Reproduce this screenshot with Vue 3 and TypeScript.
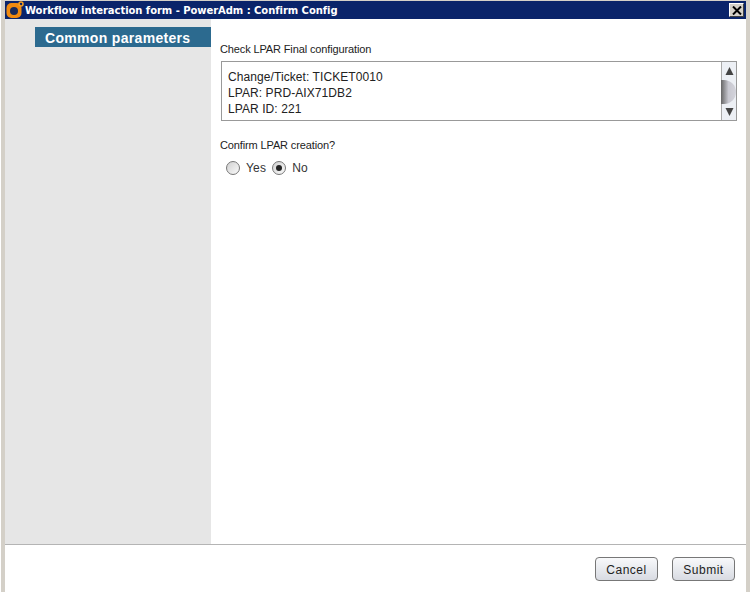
<script setup lang="ts">
const title = 'Workflow interaction form - PowerAdm : Confirm Config'
const lines = ['Change/Ticket: TICKET0010', 'LPAR: PRD-AIX71DB2', 'LPAR ID: 221']
</script>

<template>
  <div class="frame">
    <div class="window">
      <header class="titlebar">
        <svg class="logo" width="18" height="18" viewBox="0 0 18 18">
          <rect x="0.5" y="2" width="15" height="15" rx="5" fill="#f08a10" />
          <circle cx="8" cy="10" r="4" fill="#1a2a5a" />
          <circle cx="15" cy="3" r="2" fill="none" stroke="#f7a020" stroke-width="1.5" />
        </svg>
        <span class="title">{{ title }}</span>
        <button class="close" type="button" aria-label="Close">
          <svg width="10" height="9" viewBox="0 0 10 9">
            <path d="M1 0.5 L9 8.5 M9 0.5 L1 8.5" stroke="#000" stroke-width="2" />
          </svg>
        </button>
      </header>
      <div class="main">
        <aside class="sidebar">
          <div class="section">Common parameters</div>
        </aside>
        <section class="form">
          <label class="label first">Check LPAR Final configuration</label>
          <div class="textbox">
            <div class="textlines">
              <div v-for="line in lines" :key="line">{{ line }}</div>
            </div>
            <div class="scrollbar">
              <svg width="9" height="9" viewBox="0 0 9 9"><path d="M4.5 1 L8.5 9 H0.5 Z" fill="#444" /></svg>
              <div class="thumb"></div>
              <svg width="9" height="9" viewBox="0 0 9 9"><path d="M0.5 0 H8.5 L4.5 8 Z" fill="#444" /></svg>
            </div>
          </div>
          <label class="label confirm">Confirm LPAR creation?</label>
          <div class="radios">
            <span class="radio"></span><span class="rtext">Yes</span>
            <span class="radio checked"></span><span class="rtext">No</span>
          </div>
        </section>
      </div>
      <footer class="footer">
        <button class="btn" type="button">Cancel</button>
        <button class="btn" type="button">Submit</button>
      </footer>
    </div>
  </div>
</template>

<style>
html, body { margin: 0; background: #fff; }
</style>

<style scoped>
.frame {
  width: 750px;
  height: 592px;
  box-sizing: border-box;
  padding: 1px 4px 0 4px;
  background: #d4d0c8;
  border-left: 1px solid #fff;
  overflow: hidden;
  font-family: "Liberation Sans", Arial, sans-serif;
}
.window {
  height: 591px;
  display: flex;
  flex-direction: column;
  background: #fff;
}
.titlebar {
  height: 18px;
  flex: none;
  background: #0a246a;
  display: flex;
  align-items: center;
  color: #fff;
  position: relative;
}
.logo { flex: none; margin: 0 1px 0 1px; }
.title {
  font-family: "DejaVu Sans", sans-serif;
  font-weight: 700;
  font-size: 10px;
  letter-spacing: -0.05px;
  white-space: nowrap;
}
.close {
  margin-left: auto;
  margin-right: 2px;
  width: 15px;
  height: 14px;
  padding: 0;
  background: #d4d0c8;
  border: 1px solid;
  border-color: #fff #404040 #404040 #fff;
  display: flex;
  align-items: center;
  justify-content: center;
}
.main { flex: 1; display: flex; min-height: 0; }
.sidebar {
  width: 206px;
  flex: none;
  background: #e6e6e6;
  padding: 8px 0 0 30px;
  box-sizing: border-box;
}
.section {
  height: 20px;
  background: #2c6a8f;
  color: #fff;
  font-family: "Liberation Sans", Arial, sans-serif;
  font-weight: 700;
  font-size: 14px;
  letter-spacing: 0.32px;
  line-height: 22px;
  padding-left: 10px;
  white-space: nowrap;
}
.form {
  flex: 1;
  padding: 24px 0 0 9px;
  font-size: 11px;
  color: #222;
}
.label { display: block; line-height: 13px; letter-spacing: -0.13px; }
.textbox {
  margin: 5px 0 0 1px;
  width: 516px;
  height: 60px;
  box-sizing: border-box;
  border: 1px solid #999;
  display: flex;
}
.textlines {
  flex: 1;
  padding: 7px 0 0 6px;
  font-size: 12px;
  line-height: 16px;
  letter-spacing: 0.08px;
  color: #222;
}
.scrollbar {
  width: 15px;
  border-left: 1px solid #aaa;
  background: #edf0f5;
  box-sizing: border-box;
  display: flex;
  flex-direction: column;
  align-items: center;
  justify-content: space-between;
  padding: 4px 0 3px;
}
.thumb {
  width: 15px;
  height: 24px;
  background: linear-gradient(90deg, #666 0%, #c8c8d0 50%, #d4d4dc 100%);
  border-radius: 0 12px 12px 0;
  margin-left: -1px;
}
.confirm { margin-top: 18px; }
.radios {
  margin: 9px 0 0 6px;
  display: flex;
  align-items: center;
  font-size: 12px;
  color: #333;
}
.radio {
  width: 12px;
  height: 12px;
  border: 1px solid #777;
  border-radius: 50%;
  background: linear-gradient(135deg, #d0d0d0, #fafafa);
  display: flex;
  align-items: center;
  justify-content: center;
}
.radio.checked::after {
  content: "";
  width: 6px;
  height: 6px;
  border-radius: 50%;
  background: #222;
}
.rtext { margin: 0 6px 0 6px; letter-spacing: 0.2px; }
.footer {
  flex: none;
  height: 48px;
  box-sizing: border-box;
  border-top: 1px solid #b4b4b4;
  display: flex;
  justify-content: flex-end;
  gap: 14px;
  padding: 12px 11px 0 0;
}
.btn {
  width: 63px;
  height: 24px;
  padding: 2px 0 0;
  border: 1px solid #777;
  border-radius: 4px;
  background: linear-gradient(#f8f9fb, #d8dbe2);
  font-family: "Liberation Sans", Arial, sans-serif;
  font-size: 12px;
  letter-spacing: 0.5px;
  color: #222;
}
</style>
